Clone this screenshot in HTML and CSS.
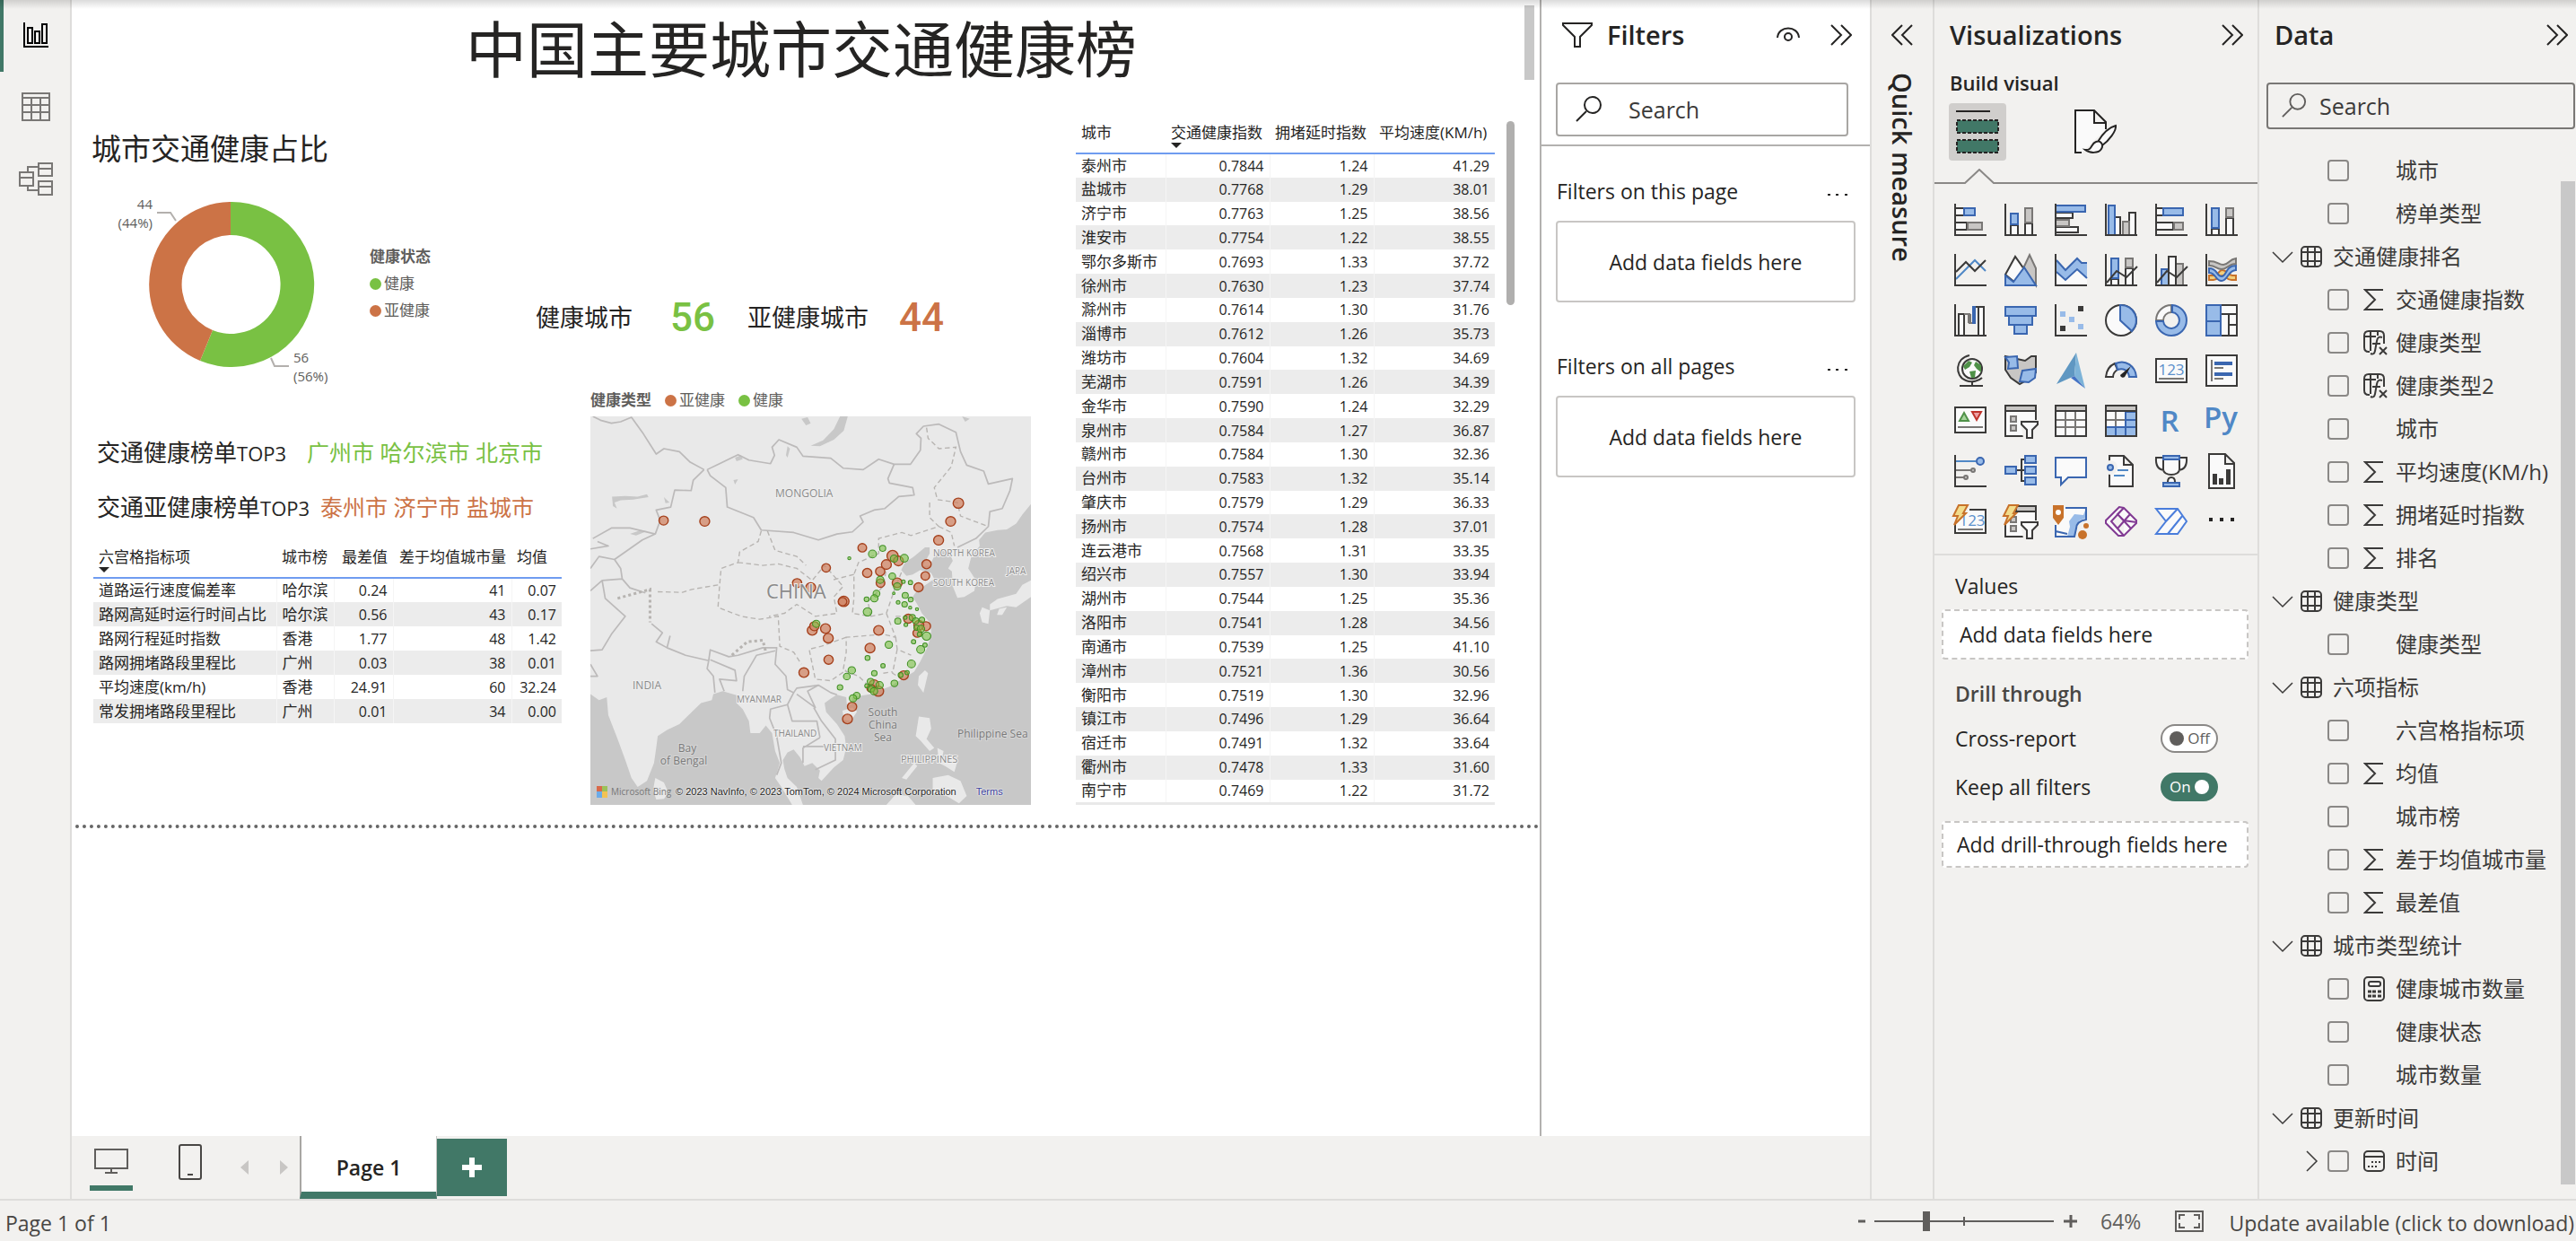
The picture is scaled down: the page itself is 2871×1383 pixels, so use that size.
FILE: index.html
```html
<!DOCTYPE html>
<html lang="zh-CN">
<head>
<meta charset="utf-8">
<title>中国主要城市交通健康榜</title>
<link rel="stylesheet" href="styles.css">
</head>
<body>
<svg class="defs" aria-hidden="true">
  <symbol id="collapse" viewBox="0 0 24 24"><path d="M1 1L12 12L1 23M12 1L23 12L12 23" fill="none" stroke="currentColor" stroke-width="2"/></symbol>
  <symbol id="search" viewBox="0 0 30 30"><circle cx="19" cy="10" r="9" fill="none" stroke="currentColor" stroke-width="2"/><path d="M12 17L1 28" stroke="currentColor" stroke-width="2"/></symbol>
  <symbol id="chevron" viewBox="0 0 24 24"><path d="M1 7L12 18L23 7" fill="none" stroke="currentColor" stroke-width="1.5"/></symbol>
  <symbol id="tbl" viewBox="0 0 24 24"><rect x="1" y="1" width="22" height="22" rx="4" fill="none" stroke="currentColor" stroke-width="2"/><path d="M8 1V23M16 1V23M1 7H23M1 17H23" stroke="currentColor" stroke-width="2"/></symbol>
  <symbol id="sigma" viewBox="0 0 24 24"><path d="M22 1H2L13 12L2 23H22" fill="none" stroke="currentColor" stroke-width="2"/></symbol>
  <symbol id="calc" viewBox="0 0 24 28"><rect x="1" y="1" width="22" height="26" rx="4" fill="none" stroke="currentColor" stroke-width="2"/><rect x="6" y="6" width="13" height="5" rx="2" fill="none" stroke="currentColor" stroke-width="2"/><path d="M5 17h4M10 17h4M16 17h4M5 22h4M10 22h4M16 22h4" stroke="currentColor" stroke-width="3"/></symbol>
  <symbol id="cal" viewBox="0 0 24 24"><rect x="1" y="1" width="22" height="22" rx="4" fill="none" stroke="currentColor" stroke-width="2"/><path d="M1 7H23" stroke="currentColor" stroke-width="2"/><path d="M9 13h2M13 13h2M17 13h2M5 18h2M9 18h2M13 18h2" stroke="currentColor" stroke-width="2"/></symbol>
  <symbol id="fx" viewBox="0 0 28 28"><path d="M7 24H6Q1 24 1 19V6Q1 1 6 1H18Q23 1 23 6V15M8 1V23M1 7H14M16 1V6" fill="none" stroke="currentColor" stroke-width="2"/><path d="M21 8Q16 6 15 12L13 23Q12 28 8 26M10 15H19" fill="none" stroke="currentColor" stroke-width="2"/><path d="M18 19L26 27M26 19L18 27" fill="none" stroke="currentColor" stroke-width="2"/></symbol>
</svg>

<div class="app">
  <nav class="rail" aria-label="Views">
    <button class="rail-btn active" aria-label="Report view"><svg width="28" height="28" viewBox="0 0 28 28"><path d="M1 0V27H28" fill="none" stroke="#000" stroke-width="2"/><path d="M5 6h5v17H5zM13 10h5v13h-5zM21 2h5v21h-5z" fill="none" stroke="#000" stroke-width="2"/></svg></button>
    <button class="rail-btn" aria-label="Table view"><svg width="32" height="32" viewBox="0 0 32 32"><path d="M1 1H31V31H1ZM1 6H31M1 14H31M1 22H31M11 6V31M21 6V31" fill="none" stroke="#797775" stroke-width="2"/></svg></button>
    <button class="rail-btn" aria-label="Model view"><svg width="38" height="38" viewBox="0 0 38 38"><path d="M22 2H37V16H22ZM22 8H37M22 22H37V37H22ZM22 28H37M1 12H16V27H1ZM1 18H16M10 12V6H22M10 27V32H22" fill="none" stroke="#797775" stroke-width="2"/></svg></button>
  </nav>

  <div class="workspace">
    <main class="canvas">
      <div class="report">
        <h1>中国主要城市交通健康榜</h1>
        <div class="report-body">
          <div class="report-left">
            <div class="overview">
              <section class="share">
                <h2>城市交通健康占比</h2>
                <div class="donut-row">
                  <svg class="donut" width="290" height="248" viewBox="0 0 290 248">
                    <path d="M155 39A92 92 0 1 1 121 216L135 182A55 55 0 1 0 155 76Z" fill="#79c143"/>
                    <path d="M155 39A92 92 0 0 0 121 216L135 182A55 55 0 0 1 155 76Z" fill="#cc7346"/>
                    <path d="M73 51H88L94 60M200 213L204 222H220" fill="none" stroke="#b3b0ad" stroke-width="2"/>
                    <text x="68" y="47" text-anchor="end">44</text><text x="68" y="68" text-anchor="end">(44%)</text>
                    <text x="225" y="218">56</text><text x="225" y="239">(56%)</text>
                  </svg>
                  <div class="legend legend-col"><b>健康状态</b><span><i class="dot good"></i>健康</span><span><i class="dot sub"></i>亚健康</span></div>
                </div>
              </section>
              <div class="cards">
                <span>健康城市</span><strong class="c-good">56</strong><span>亚健康城市</span><strong class="c-sub">44</strong>
              </div>
            </div>
            <div class="lower">
              <div class="ranks">
                <p class="top3 wide"><span>交通健康榜单<small>TOP3</small></span><span class="names c-good">广州市 哈尔滨市 北京市</span></p>
                <p class="top3"><span>交通亚健康榜单<small>TOP3</small></span><span class="names c-sub">泰州市 济宁市 盐城市</span></p>
                <table class="grid six">
                  <colgroup><col class="w1"><col class="w2"><col class="w3"><col class="w4"><col class="w5"></colgroup>
                  <thead><tr><th>六宫格指标项<i class="sort"></i></th><th>城市榜</th><th class="n">最差值</th><th class="n">差于均值城市量</th><th>均值</th></tr></thead>
                  <tbody>
                    <tr><td>道路运行速度偏差率</td><td>哈尔滨</td><td>0.24</td><td>41</td><td>0.07</td></tr>
                    <tr><td>路网高延时运行时间占比</td><td>哈尔滨</td><td>0.56</td><td>43</td><td>0.17</td></tr>
                    <tr><td>路网行程延时指数</td><td>香港</td><td>1.77</td><td>48</td><td>1.42</td></tr>
                    <tr><td>路网拥堵路段里程比</td><td>广州</td><td>0.03</td><td>38</td><td>0.01</td></tr>
                    <tr><td>平均速度(km/h)</td><td>香港</td><td>24.91</td><td>60</td><td>32.24</td></tr>
                    <tr><td>常发拥堵路段里程比</td><td>广州</td><td>0.01</td><td>34</td><td>0.00</td></tr>
                  </tbody>
                </table>
              </div>
              <section class="map-box">
                <div class="legend"><b>健康类型</b><span><i class="dot sub"></i>亚健康</span><span><i class="dot good"></i>健康</span></div>
                <div class="map">
                  <svg viewBox="0 0 491 433" width="491" height="433">
                    <rect width="491" height="433" fill="#c8c8c8"/>
                    <g transform="scale(.34435 .33359) translate(-52 -132)">
                      <g fill="#e9e9e9">
                        <path d="M52 132H1478V425L1450 460 1430 490 1400 510 1370 512 1330 520 1310 545 1312 565 1285 600 1275 640 1300 680 1295 715 1262 735 1240 738 1225 700 1222 650 1210 640 1225 615 1215 590 1190 580 1165 600 1150 630 1128 632 1150 590 1150 570 1135 570 1100 600 1070 620 1058 645 1075 665 1095 660 1120 645 1155 655 1165 675 1130 700 1105 720 1095 735 1110 760 1125 790 1150 820 1155 850 1150 880 1140 910 1120 950 1100 985 1060 1010 1020 1035 980 1050 960 1060 930 1065 900 1070 898 1095 882 1095 880 1070 850 1062 830 1075 810 1090 815 1120 850 1160 875 1200 880 1240 870 1280 840 1305 800 1350 790 1340 795 1315 770 1290 745 1300 730 1270 710 1245 690 1255 675 1280 680 1310 690 1340 720 1370 740 1430H705L670 1370 650 1340 665 1290 650 1250 640 1190 620 1165 600 1190 570 1190 565 1150 545 1110 525 1090 530 1065 480 1050 450 1060 445 1080 410 1090 380 1120 340 1160 300 1180 270 1200 265 1240 258 1290 235 1350 205 1370 185 1340 165 1280 140 1210 110 1130 105 1070 80 1080 52 1060Z"/>
                        <path d="M262 1340L290 1355 305 1390 290 1410 265 1412 255 1380ZM868 1115L900 1105 915 1118 895 1150 872 1145ZM1135 980L1145 990 1130 1055 1112 1030 1115 1000ZM1478 680L1450 695 1430 725 1370 742 1345 760 1345 780 1400 765 1430 770 1478 735ZM1320 770L1345 780 1340 825 1320 820 1312 790ZM1375 775L1400 770 1385 795 1368 795ZM1115 1135L1150 1140 1155 1175 1140 1210 1165 1240 1150 1250 1120 1215 1105 1200ZM1175 1240L1195 1250 1190 1275 1215 1260 1240 1285 1230 1320 1200 1300 1180 1290ZM1160 1340L1210 1330 1250 1350 1270 1400 1245 1425 1205 1400 1160 1390ZM1100 1290L1060 1340 1075 1345 1110 1300ZM1010 1430L1040 1395 1080 1400 1105 1430ZM1255 655L1262 662 1258 668Z"/>
                      </g>
                      <g fill="#c8c8c8">
                        <path d="M885 132L872 180 840 210 795 232 765 230 805 212 840 175 860 132ZM122 400L165 398 205 400 235 392 240 402 190 410 150 412 130 420 138 440 125 432ZM180 525L215 512 235 516 200 530ZM690 232L698 240 690 270 685 262ZM520 270L540 262 545 275 525 282ZM515 345L530 342 520 360ZM735 140L755 135 765 155 750 162ZM1255 132L1280 140 1265 150ZM290 402L308 420 295 422Z"/>
                      </g>
                      <g fill="none" stroke="#bcbaba" stroke-width="5" stroke-linejoin="round">
                        <path d="M60 132L85 145 120 155 150 150 185 135 220 185 265 258 290 240 340 250 375 285 420 310"/>
                        <path d="M430 310L470 290 530 260 565 278 635 290 648 262 640 235 662 210 720 235 740 265 830 272 870 305 935 310 985 275 1035 292 1088 292 1120 245 1122 205 1107 190 1130 165 1180 158 1235 185 1250 250 1270 295 1325 315 1340 358 1418 340 1410 380 1385 440 1345 450 1340 500 1300 540 1240 570"/>
                        <path d="M430 310L440 330 490 370 495 435 580 470 605 512 710 520 790 545 850 525 900 518 935 485 925 465 970 445 1005 440 1050 400 1100 395 1095 370 1020 355 1015 340 1035 292"/>
                        <path d="M420 310L385 345 378 380 325 378 312 435 265 445 278 480 262 525 220 545 130 610 150 640 155 675 90 680 52 715M60 540L120 505 180 505 262 525M52 575L110 565 75 550M130 610L80 600 52 640M155 675L180 705 230 722M90 680L100 740 165 800 120 860 90 912 52 915M52 960L75 1000 52 1000"/>
                        <path d="M250 825L285 855 265 885 300 905 360 930 435 948 440 912 500 935 530 930 610 905 655 905 650 960 685 1000 690 1045 710 1055 720 1040 790 1030 830 1055 850 1062M435 948L430 975 450 1000 455 1055M440 945L520 980 525 1015 470 1010 485 1050M300 905L310 865M650 915L590 930 550 1000 545 1050"/>
                        <path d="M710 1055L690 1095 635 1110 632 1140 655 1200 670 1290 655 1330M690 1095L705 1150 785 1150 795 1205M720 1060L780 1105 755 1050 790 1030M775 1105L800 1150 845 1210 845 1280 780 1312M795 1205L740 1240 740 1290M840 1235L740 1235"/>
                      </g>
                      <g fill="none" stroke="#b7b4b1" stroke-width="4" stroke-dasharray="16 10">
                        <path d="M605 515L595 550 535 585 530 620 475 640 470 700 465 770 540 800 600 810 660 800 665 900 710 920 735 960M465 695L380 710 350 720 270 718M530 620L610 630 660 625 720 640 770 680 810 630 870 700 840 735 850 790 780 800 720 760 680 790 630 800M625 515L650 580 720 600 750 630"/>
                        <path d="M1140 170L1145 205 1180 240 1235 235 1220 300 1165 370 1175 410 1240 420 1250 465 1340 500M1150 420L1150 470 1180 500 1090 530 1060 520 985 540 985 590 920 620 905 660 905 740 900 790 960 800 1010 790 1040 700 1060 650M1180 500L1220 520 1230 565M1010 790L1040 870 1000 860 880 870 880 920 870 980 920 1000 960 1040M880 870L800 900 760 910 770 960 780 1010 830 1015 880 980M1040 870L1045 910 1090 930M1045 910L1030 990 1060 1010M905 660L830 680M960 800L950 750 1000 700 1010 640M1040 800L1100 800M1000 990L1030 985"/>
                        <path d="M140 740L245 710 245 820M510 930L560 885 610 880 620 920" stroke-width="9" stroke-dasharray="9 9"/>
                      </g>
                      <g fill="#d08464" fill-opacity=".75" stroke="#a5401c" stroke-width="4">
                        <circle cx="289" cy="480" r="15"/><circle cx="422" cy="483" r="16"/><circle cx="1243" cy="422" r="17"/><circle cx="1218" cy="483" r="16"/><circle cx="1179" cy="546" r="16"/><circle cx="932" cy="571" r="14"/><circle cx="815" cy="638" r="14"/><circle cx="721" cy="689" r="15"/><circle cx="765" cy="704" r="16"/><circle cx="872" cy="750" r="17"/><circle cx="868" cy="751" r="14"/><circle cx="948" cy="655" r="15"/><circle cx="990" cy="650" r="15"/><circle cx="1010" cy="627" r="16"/><circle cx="1030" cy="598" r="18"/><circle cx="1049" cy="615" r="16"/><circle cx="991" cy="689" r="14"/><circle cx="1045" cy="688" r="16"/><circle cx="1140" cy="626" r="15"/><circle cx="1136" cy="665" r="14"/><circle cx="1114" cy="703" r="15"/><circle cx="770" cy="847" r="16"/><circle cx="777" cy="833" r="15"/><circle cx="813" cy="841" r="16"/><circle cx="822" cy="873" r="16"/><circle cx="985" cy="847" r="16"/><circle cx="957" cy="906" r="16"/><circle cx="823" cy="945" r="15"/><circle cx="743" cy="988" r="16"/><circle cx="1066" cy="997" r="15"/><circle cx="1081" cy="808" r="15"/><circle cx="1138" cy="833" r="15"/><circle cx="1115" cy="830" r="16"/><circle cx="1110" cy="856" r="14"/><circle cx="970" cy="1028" r="16"/><circle cx="984" cy="1050" r="17"/><circle cx="960" cy="1040" r="13"/><circle cx="899" cy="1102" r="15"/><circle cx="884" cy="1143" r="16"/>
                      </g>
                      <g fill="#79c143" fill-opacity=".6" stroke="#3f8f24" stroke-width="3">
                        <circle cx="890" cy="606" r="5"/><circle cx="998" cy="573" r="10"/><circle cx="965" cy="592" r="13"/><circle cx="1068" cy="606" r="13"/><circle cx="1035" cy="607" r="12"/><circle cx="1029" cy="666" r="11"/><circle cx="990" cy="678" r="12"/><circle cx="1045" cy="700" r="12"/><circle cx="1065" cy="684" r="6"/><circle cx="1088" cy="687" r="7"/><circle cx="1034" cy="723" r="4"/><circle cx="978" cy="724" r="11"/><circle cx="971" cy="740" r="12"/><circle cx="946" cy="743" r="8"/><circle cx="1071" cy="730" r="10"/><circle cx="1089" cy="744" r="8"/><circle cx="1048" cy="753" r="6"/><circle cx="1069" cy="760" r="9"/><circle cx="1087" cy="771" r="5"/><circle cx="1109" cy="776" r="5"/><circle cx="949" cy="785" r="14"/><circle cx="1047" cy="816" r="10"/><circle cx="1071" cy="804" r="6"/><circle cx="1094" cy="804" r="10"/><circle cx="1105" cy="815" r="10"/><circle cx="1125" cy="812" r="9"/><circle cx="1073" cy="828" r="6"/><circle cx="1108" cy="838" r="9"/><circle cx="1122" cy="842" r="12"/><circle cx="1118" cy="860" r="8"/><circle cx="1140" cy="866" r="14"/><circle cx="1098" cy="885" r="7"/><circle cx="1135" cy="896" r="7"/><circle cx="1121" cy="911" r="13"/><circle cx="1018" cy="895" r="12"/><circle cx="783" cy="825" r="12"/><circle cx="949" cy="939" r="8"/><circle cx="999" cy="965" r="7"/><circle cx="1091" cy="959" r="13"/><circle cx="1077" cy="988" r="7"/><circle cx="1056" cy="996" r="8"/><circle cx="1036" cy="1024" r="11"/><circle cx="898" cy="980" r="12"/><circle cx="882" cy="1001" r="11"/><circle cx="860" cy="1037" r="9"/><circle cx="971" cy="990" r="9"/><circle cx="959" cy="1018" r="11"/><circle cx="947" cy="1032" r="7"/><circle cx="988" cy="1030" r="12"/><circle cx="961" cy="1043" r="10"/><circle cx="970" cy="1050" r="12"/><circle cx="914" cy="1065" r="11"/><circle cx="902" cy="1074" r="12"/>
                      </g>
                    </g>
                    <g class="place">
                      <text x="206" y="90" font-size="12">MONGOLIA</text><text x="196" y="203" font-size="22">CHINA</text>
                      <text x="382" y="156" font-size="10">NORTH KOREA</text><text x="382" y="189" font-size="10">SOUTH KOREA</text><text x="464" y="176" font-size="10">JAPA</text>
                      <text x="47" y="304" font-size="12">INDIA</text><text x="163" y="319" font-size="10">MYANMAR</text><text x="204" y="357" font-size="10">THAILAND</text><text x="260" y="373" font-size="10">VIETNAM</text><text x="346" y="386" font-size="11">PHILIPPINES</text>
                    </g>
                    <g class="sea" font-size="12">
                      <text x="326" y="334" text-anchor="middle">South</text><text x="326" y="348" text-anchor="middle">China</text><text x="326" y="362" text-anchor="middle">Sea</text>
                      <text x="108" y="374" text-anchor="middle">Bay</text><text x="104" y="388" text-anchor="middle">of Bengal</text><text x="409" y="358">Philippine Sea</text>
                    </g>
                  </svg>
                  <div class="attribution"><svg width="12" height="13" viewBox="0 0 12 13"><path d="M0 0h6v6H0z" fill="#d9694a"/><path d="M6 0h6v6H6z" fill="#9cc25a"/><path d="M0 6h6v7H0z" fill="#6cabe8"/><path d="M6 6h6v7H6z" fill="#f3c253"/></svg><span class="bing">Microsoft Bing</span><span class="copy">© 2023 NavInfo, © 2023 TomTom, © 2024 Microsoft Corporation</span><a href="#terms">Terms</a></div>
                </div>
              </section>
            </div>
          </div>
          <div class="index-panel">
            <table class="grid cities">
              <colgroup><col class="c1"><col class="c2"><col class="c3"><col class="c4"></colgroup>
              <thead><tr><th>城市</th><th>交通健康指数<i class="sort"></i></th><th>拥堵延时指数</th><th>平均速度(KM/h)</th></tr></thead>
              <tbody>
                <tr><td>泰州市</td><td>0.7844</td><td>1.24</td><td>41.29</td></tr>
                <tr><td>盐城市</td><td>0.7768</td><td>1.29</td><td>38.01</td></tr>
                <tr><td>济宁市</td><td>0.7763</td><td>1.25</td><td>38.56</td></tr>
                <tr><td>淮安市</td><td>0.7754</td><td>1.22</td><td>38.55</td></tr>
                <tr><td>鄂尔多斯市</td><td>0.7693</td><td>1.33</td><td>37.72</td></tr>
                <tr><td>徐州市</td><td>0.7630</td><td>1.23</td><td>37.74</td></tr>
                <tr><td>滁州市</td><td>0.7614</td><td>1.30</td><td>31.76</td></tr>
                <tr><td>淄博市</td><td>0.7612</td><td>1.26</td><td>35.73</td></tr>
                <tr><td>潍坊市</td><td>0.7604</td><td>1.32</td><td>34.69</td></tr>
                <tr><td>芜湖市</td><td>0.7591</td><td>1.26</td><td>34.39</td></tr>
                <tr><td>金华市</td><td>0.7590</td><td>1.24</td><td>32.29</td></tr>
                <tr><td>泉州市</td><td>0.7584</td><td>1.27</td><td>36.87</td></tr>
                <tr><td>赣州市</td><td>0.7584</td><td>1.30</td><td>32.36</td></tr>
                <tr><td>台州市</td><td>0.7583</td><td>1.32</td><td>35.14</td></tr>
                <tr><td>肇庆市</td><td>0.7579</td><td>1.29</td><td>36.33</td></tr>
                <tr><td>扬州市</td><td>0.7574</td><td>1.28</td><td>37.01</td></tr>
                <tr><td>连云港市</td><td>0.7568</td><td>1.31</td><td>33.35</td></tr>
                <tr><td>绍兴市</td><td>0.7557</td><td>1.30</td><td>33.94</td></tr>
                <tr><td>湖州市</td><td>0.7544</td><td>1.25</td><td>35.36</td></tr>
                <tr><td>洛阳市</td><td>0.7541</td><td>1.28</td><td>34.56</td></tr>
                <tr><td>南通市</td><td>0.7539</td><td>1.25</td><td>41.10</td></tr>
                <tr><td>漳州市</td><td>0.7521</td><td>1.36</td><td>30.56</td></tr>
                <tr><td>衡阳市</td><td>0.7519</td><td>1.30</td><td>32.96</td></tr>
                <tr><td>镇江市</td><td>0.7496</td><td>1.29</td><td>36.64</td></tr>
                <tr><td>宿迁市</td><td>0.7491</td><td>1.32</td><td>33.64</td></tr>
                <tr><td>衢州市</td><td>0.7478</td><td>1.33</td><td>31.60</td></tr>
                <tr><td>南宁市</td><td>0.7469</td><td>1.22</td><td>31.72</td></tr>
              </tbody>
            </table>
            <div class="thumb"></div>
          </div>
        </div>
      </div>
      <div class="page-scroll"></div>
    </main>

    <aside class="filters">
      <header>
        <svg width="34" height="30" viewBox="0 0 34 30"><path d="M1 2H33V4L20 17V28H14V17L1 4Z" fill="none" stroke="#252423" stroke-width="2"/></svg>
        <h3>Filters</h3>
        <button class="ic eye" aria-label="Show filters"><svg width="26" height="18" viewBox="0 0 26 18"><path d="M1 12C2 -2 24 -2 25 12" fill="none" stroke="#252423" stroke-width="2"/><circle cx="13" cy="11" r="4" fill="none" stroke="#252423" stroke-width="2"/></svg></button>
        <button class="ic" aria-label="Collapse filters"><svg width="24" height="24"><use href="#collapse"/></svg></button>
      </header>
      <div class="search"><svg width="30" height="30"><use href="#search"/></svg><input type="text" placeholder="Search" aria-label="Search filters"></div>
      <div class="filter-group">
        <div class="filter-title"><span>Filters on this page</span><button class="ic" aria-label="More"><svg width="22" height="4"><path d="M0 2h3M9 2h3M19 2h3" stroke="#252423" stroke-width="2"/></svg></button></div>
        <div class="drop">Add data fields here</div>
      </div>
      <div class="filter-group">
        <div class="filter-title"><span>Filters on all pages</span><button class="ic" aria-label="More"><svg width="22" height="4"><path d="M0 2h3M9 2h3M19 2h3" stroke="#252423" stroke-width="2"/></svg></button></div>
        <div class="drop">Add data fields here</div>
      </div>
    </aside>

    <div class="tabs">
      <button class="device on" aria-label="Desktop layout"><svg width="38" height="28" viewBox="0 0 38 28"><path d="M1 1H37V22H1ZM19 22V27M12 27H26" fill="none" stroke="#605e5c" stroke-width="2"/></svg></button>
      <button class="device phone" aria-label="Mobile layout"><svg width="26" height="40" viewBox="0 0 26 40"><rect x="1" y="1" width="24" height="38" rx="2" fill="none" stroke="#484644" stroke-width="2"/><path d="M10 34h6" stroke="#484644" stroke-width="2"/></svg></button>
      <button class="step" aria-label="Previous page"><svg width="9" height="16"><path d="M9 0V16L0 8Z" fill="#c8c6c4"/></svg></button>
      <button class="step" aria-label="Next page"><svg width="9" height="16"><path d="M0 0V16L9 8Z" fill="#c8c6c4"/></svg></button>
      <button class="tab">Page 1</button>
      <button class="add" aria-label="New page"><svg width="22" height="22"><path d="M11 0V22M0 11H22" stroke="#fff" stroke-width="6"/></svg></button>
    </div>
  </div>

  <aside class="quick">
    <button class="ic flip" aria-label="Expand quick measure"><svg width="24" height="24"><use href="#collapse"/></svg></button>
    <h3>Quick measure</h3>
  </aside>

  <aside class="vis">
    <header><h3>Visualizations</h3><button class="ic" aria-label="Collapse visualizations"><svg width="24" height="24"><use href="#collapse"/></svg></button></header>
    <h4>Build visual</h4>
    <div class="modes">
      <button class="mode on" aria-label="Build visual"><svg width="48" height="50" viewBox="0 0 48 50"><path d="M0 2H38" stroke="#252423" stroke-width="2"/><path d="M1 12H47V26H1ZM1 34H47V48H1Z" fill="#417867" stroke="#252423" stroke-width="2" stroke-dasharray="4 2"/></svg></button>
      <button class="mode" aria-label="Format page"><svg width="48" height="50" viewBox="0 0 48 50"><path d="M8 48H1V1H22L35 14V22M22 1V15H35" fill="#fafafa" stroke="#252423" stroke-width="2"/><path d="M12 45C20 46 18 38 24 36C29 34 33 39 30 44C27 49 17 49 12 45ZM26 36C32 26 38 20 46 18C47 24 38 35 31 40" fill="#fafafa" stroke="#252423" stroke-width="2"/></svg></button>
    </div>
    <svg class="notch" height="18" width="100%"><path d="M0 16H34L50 1L66 16H400" fill="none" stroke="#8a8886" stroke-width="2"/></svg>
    <div class="gallery">
      <button aria-label="Stacked bar"><svg viewBox="0 0 36 36"><path class="k" d="M1 5h10v8H1zM1 21h13v8H1z"/><path class="b" d="M11 5h12v8H11z"/><path class="g" d="M15 21h16v8H15z"/><path class="ln" d="M1 0V35H36"/></svg></button>
      <button aria-label="Stacked column"><svg viewBox="0 0 36 36"><path class="k" d="M7 24h8v11H7zM23 22h8v13h-8z"/><path class="b" d="M7 11h8v12H7z"/><path class="g" d="M23 5h8v16h-8z"/><path class="ln" d="M1 0V35H36"/></svg></button>
      <button aria-label="Clustered bar"><svg viewBox="0 0 36 36"><path class="k" d="M1 10h19v6H1zM1 26h25v6H1z"/><path class="g" d="M1 18h15v7H1z"/><path class="b" d="M1 2h33v7H1z"/><path class="ln" d="M1 0V35H36"/></svg></button>
      <button aria-label="Clustered column"><svg viewBox="0 0 36 36"><path class="k" d="M11 15h6v20h-6zM27 10h7v25h-7z"/><path class="g" d="M20 20h7v15h-7z"/><path class="b" d="M4 2h7v33H4z"/><path class="ln" d="M1 0V35H36"/></svg></button>
      <button aria-label="100% stacked bar"><svg viewBox="0 0 36 36"><path class="k" d="M1 5h8v8H1zM1 21h19v8H1z"/><path class="b" d="M9 5h22v8H9z"/><path class="g" d="M21 21h10v8H21z"/><path class="ln" d="M1 0V35H36"/></svg></button>
      <button aria-label="100% stacked column"><svg viewBox="0 0 36 36"><path class="k" d="M7 28h8v7H7zM23 16h8v19h-8z"/><path class="b" d="M7 5h8v22H7z"/><path class="g" d="M23 5h8v10h-8z"/><path class="ln" d="M1 0V35H36"/></svg></button>

      <button aria-label="Line"><svg viewBox="0 0 36 36"><path class="lb" d="M2 28L23 7L35 19"/><path class="ln" d="M2 20L13 9L23 19L35 7"/><path class="ln" d="M1 0V35H36"/></svg></button>
      <button aria-label="Area"><svg viewBox="0 0 36 36"><path class="k" d="M1 23L12 3L24 20L12 32Z"/><path class="g" d="M21 16L28 1L35 16V35Z"/><path class="b" d="M1 24L10 31L22 15L35 35H1Z"/></svg></button>
      <button aria-label="Stacked area"><svg viewBox="0 0 36 36"><path d="M2 21L12 29L25 17L36 27V34H2Z" fill="#fafafa"/><path d="M2 7L12 18L25 5L30 10H36V27L25 17L12 29L2 20Z" fill="#98bbe8"/><path d="M2 7L12 18L25 5L30 10H36M36 27L25 17L12 29L2 20" fill="none" stroke="#3a66b0" stroke-width="2"/><path class="ln" d="M1 0V35H36"/></svg></button>
      <button aria-label="Line and stacked column"><svg viewBox="0 0 36 36"><path class="k" d="M7 28h8v7H7zM23 16h8v19h-8z"/><path class="b" d="M7 5h8v22H7z"/><path class="g" d="M23 5h8v10h-8z"/><path class="ln" d="M2 32L13 19L24 26L36 14M1 0V35H36"/></svg></button>
      <button aria-label="Line and clustered column"><svg viewBox="0 0 36 36"><path class="b" d="M7 17h8v18H7z"/><path class="g" d="M23 11h8v24h-8z"/><path class="k" d="M15 3h8v32h-8z"/><path class="ln" d="M2 32L13 19L24 26L36 14M1 0V35H36"/></svg></button>
      <button aria-label="Ribbon"><svg viewBox="0 0 36 36"><path d="M4 24H9C15 24 14 18 19 18S25 24 30 24H34V29H29C23 29 23 24 19 24S14 29 9 29H4Z" fill="#f2cf7c" stroke="#c8722a" stroke-width="2"/><path class="g" d="M4 8C14 8 14 12 20 12S26 6 34 5V11C26 11 24 17 18 17S10 12 4 13Z"/><path class="b" d="M4 16C14 16 12 25 18 25S22 13 34 13V18C25 18 25 30 18 30S12 21 4 21Z"/><path class="ln" d="M1 0V35H36"/></svg></button>

      <button aria-label="Waterfall"><svg viewBox="0 0 36 36"><path class="k" d="M5 11h6v24H5zM27 3h6v32h-6z"/><path d="M11 11h6v10h4" fill="none" stroke="#797775" stroke-width="2"/><path d="M15 11h4v10h-4z" fill="#797775"/><path d="M20 2h4v20h-4z" fill="#3a66b0"/><path class="ln" d="M24 3h4M1 0V35H36"/></svg></button>
      <button aria-label="Funnel"><svg viewBox="0 0 36 36"><path class="b" d="M1 3h34v10H1zM5 13h26v10H5zM11 23h14v10H11z"/></svg></button>
      <button aria-label="Scatter"><svg viewBox="0 0 36 36"><path d="M6 8h6v6H6zM16 14h6v6h-6zM26 22h6v6h-6z" fill="#98bbe8"/><path d="M26 2h6v6h-6zM6 24h6v6H6z" fill="#3b3a39"/><path class="ln" d="M1 0V35H36"/></svg></button>
      <button aria-label="Pie"><svg viewBox="0 0 36 36"><circle class="k" cx="18" cy="18" r="17"/><path class="b" d="M17 18V1A17 17 0 0 1 30 30Z"/></svg></button>
      <button aria-label="Donut"><svg viewBox="0 0 36 36"><path d="M18 1V9A9 9 0 0 0 9 18H1A17 17 0 0 1 18 1Z" fill="#fafafa" stroke="#797775" stroke-width="2"/><path class="b" d="M19 1A17 17 0 1 1 1 19H9A9 9 0 1 0 19 9Z"/></svg></button>
      <button aria-label="Treemap"><svg viewBox="0 0 36 36"><path class="k" d="M17 1H35V35H17ZM17 11H35M26 11V35M26 23H35"/><path class="b" d="M1 1h16v34H1zM1 19H17"/></svg></button>

      <button aria-label="Map"><svg viewBox="0 0 36 36"><circle class="k" cx="20" cy="16" r="11"/><path d="M10 13L16 7 20 9 17 14 12 17ZM24 8L30 12V20L25 16 22 12ZM17 19L24 18 23 26 19 26Z" fill="#4f9148"/><path class="ln" d="M17 1C1 4 0 24 13 29C20 32 28 29 31 26M20 31V35M6 35H32"/></svg></button>
      <button aria-label="Filled map"><svg viewBox="0 0 36 36"><path class="g s" d="M14 5L23 7 30 2H35V20L26 28 17 33 7 26 1 17V2Z"/><path class="b" d="M1 3L14 2 15 15 4 16 5 9ZM20 18L35 16 34 26 27 31 17 30Z"/></svg></button>
      <button aria-label="Azure map"><svg viewBox="0 0 36 36"><path d="M24 -2L2 33L22 24Z" fill="#5f97c2"/><path d="M24 -2L22 24L34 38Z" fill="#7db3d8"/><path d="M18 26L22 24L34 38Z" fill="#4472c4"/></svg></button>
      <button aria-label="Gauge"><svg viewBox="0 0 36 36"><path class="k" d="M1 25Q2 14 11 10L14 17Q9 20 9 25Z"/><path class="b" d="M12 10C23 5 34 13 35 25H27C26 17 20 15 14 17Z"/><path d="M17 23L29 13 22 25A3 3 0 0 1 17 23Z" fill="#252423"/></svg></button>
      <button aria-label="Card"><svg viewBox="0 0 36 36"><rect class="k" x="1" y="5" width="34" height="26"/><text x="18" y="23" text-anchor="middle" class="num">123</text><path class="lg" d="M4 27H32"/></svg></button>
      <button aria-label="Multi-row card"><svg viewBox="0 0 36 36"><rect class="k" x="1" y="1" width="34" height="34"/><path class="lg" d="M7 6V30M10 15H20M10 27H20"/><path d="M10 10H30M10 22H30" stroke="#3a66b0" stroke-width="4"/></svg></button>

      <button aria-label="KPI"><svg viewBox="0 0 36 36"><rect class="k" x="1" y="3" width="34" height="28"/><path d="M6 18L11 9L16 18Z" fill="#a6d49c" stroke="#4f9148" stroke-width="2"/><path d="M20 8H30L25 17Z" fill="#eba1a4" stroke="#c0342c" stroke-width="2"/><path class="lg" d="M4 25H32"/></svg></button>
      <button aria-label="Slicer"><svg viewBox="0 0 36 36"><path class="k" d="M1 1H35V35H1Z"/><path class="g s" d="M1 1H35V7H1Z"/><path class="g" d="M7 13h6v6H7zM7 23h6v6H7z"/><path d="M17 17H38V37H21Z" fill="#f2f1ef"/><path class="k" d="M19 19H37V22L31 28V37H25V28L19 22Z"/></svg></button>
      <button aria-label="Table"><svg viewBox="0 0 36 36"><rect class="k" x="1" y="1" width="34" height="34"/><path class="lg" d="M12 7V34M23 7V34M2 17H34M2 25H34"/><path class="g s" d="M1 1H35V7H1Z"/><path class="ln" d="M1 1H35V35H1Z"/></svg></button>
      <button aria-label="Matrix"><svg viewBox="0 0 36 36"><rect class="k" x="1" y="1" width="34" height="34"/><path class="lg" d="M12 7V25M2 17H23"/><path class="b" d="M23 8H35V35H1V25H23ZM23 17H35M23 25H35M12 25V35M23 25V35"/><path class="g s" d="M1 1H35V7H1Z"/><path class="ln" d="M1 1H35V35H1Z"/></svg></button>
      <button aria-label="R script"><svg viewBox="0 0 36 36"><text class="lang" x="16" y="30" text-anchor="middle">R</text></svg></button>
      <button aria-label="Python script"><svg viewBox="0 0 36 36"><text class="lang" x="17" y="26" text-anchor="middle">Py</text></svg></button>

      <button aria-label="Key influencers"><svg viewBox="0 0 36 36"><path class="lb" d="M2 7H24"/><path class="lg" d="M2 17H20M2 25H12"/><circle class="b" cx="29" cy="7" r="4"/><circle class="g" cx="21" cy="17" r="2"/><circle class="g" cx="13" cy="25" r="2"/><path class="ln" d="M1 0V35H36"/></svg></button>
      <button aria-label="Decomposition tree"><svg viewBox="0 0 36 36"><path class="ln" d="M14 17H22M23 5H19V29H23"/><path class="b" d="M1 13h12v8H1zM23 1h12v8H23zM23 13h12v8H23zM23 25h12v8H23z"/></svg></button>
      <button aria-label="Q&amp;A"><svg viewBox="0 0 36 36"><path d="M1 3H35V25H15L7 33V25H1Z" fill="#fafafa" stroke="#3a66b0" stroke-width="2"/></svg></button>
      <button aria-label="Narrative"><svg viewBox="0 0 36 36"><path class="k" d="M5 1H21L31 11V35H5ZM21 1V11H31"/><circle cx="6" cy="14" r="8" fill="#f2f1ef"/><circle class="b" cx="6" cy="14" r="3"/><path class="lb" d="M14 17H26M10 23H22"/></svg></button>
      <button aria-label="Goals"><svg viewBox="0 0 36 36"><path class="k" d="M9 3H1Q0 16 10 17M27 3H35Q36 16 26 17M9 3V16C9 24 27 24 27 16V3ZM14 30Q14 25 18 25T22 30"/><path class="b" d="M9 1h18v4H9zM9 31h18v4H9z"/></svg></button>
      <button aria-label="Paginated report"><svg viewBox="0 0 36 36"><path class="k" d="M4 -1H22L32 9V37H4ZM22 -1V10H32"/><path d="M8 21h5v12H8zM15 26h5v7h-5zM23 16h5v17h-5z" fill="#3b3a39"/></svg></button>

      <button aria-label="Card (new)"><svg viewBox="0 0 36 36"><path class="k" d="M17 5H35V31H1V20"/><text x="20" y="23" text-anchor="middle" class="num">123</text><path class="lg" d="M4 27H32"/><path class="bolt" d="M5 0H15L10 9H13L0 22L4 12H-1Z"/></svg></button>
      <button aria-label="Slicer (new)"><svg viewBox="0 0 36 36"><path class="k" d="M9 1H35V35H1V20"/><path class="g s" d="M13 1H35V7H13Z"/><path class="g" d="M7 13h6v6H7zM7 23h6v6H7z"/><path d="M17 17H38V37H21Z" fill="#f2f1ef"/><path class="k" d="M19 19H37V22L31 28V37H25V28L19 22Z"/><path class="bolt" d="M5 0H15L10 9H13L0 22L4 12H-1Z"/></svg></button>
      <button aria-label="ArcGIS map"><svg viewBox="0 0 36 36"><path d="M12 3H35V16L24 24L20 35H1V22Z" fill="#fafafa"/><path d="M35 14L28 17 24 24 23 35H14L17 24 16 18 22 10 32 11 35 3Z" fill="#98bbe8"/><path d="M12 3H35V16Q24 18 24 26L22 35H1V22M1 29L14 32" fill="none" stroke="#3a66b0" stroke-width="2"/><path d="M-2 0H10V14L4 22L-2 14Z" fill="#c8722a"/><circle cx="4" cy="8" r="3" fill="#fff"/><circle cx="31" cy="33" r="5" fill="#c8722a"/><circle cx="35" cy="23" r="3" fill="#c8722a"/></svg></button>
      <button aria-label="Power Apps"><svg viewBox="0 0 36 36"><path d="M16 2L1 17V20L15 34H21L35 20V17L21 3ZM21 3L14 10L29 26M14 10L21 17L35 19M28 10L14 26M21 34L14 26L7 18L21 3" fill="#fafafa" stroke="#813a93" stroke-width="2"/></svg></button>
      <button aria-label="Power Automate"><svg viewBox="0 0 36 36"><path d="M1 4H25L35 18L25 32H1L12 18ZM12 18L25 4M14 32L31 11" fill="#fafafa" stroke="#4a7ddb" stroke-width="2"/></svg></button>
      <button aria-label="More visuals"><svg viewBox="0 0 36 36"><path d="M4 16h4M16 16h4M28 16h4" stroke="#252423" stroke-width="4"/></svg></button>
    </div>
    <div class="wells">
      <p>Values</p>
      <div class="well">Add data fields here</div>
      <h4>Drill through</h4>
      <label class="switch"><span>Cross-report</span><span class="toggle"><input type="checkbox" role="switch"><em>Off</em></span></label>
      <label class="switch"><span>Keep all filters</span><span class="toggle"><input type="checkbox" role="switch" checked><em>On</em></span></label>
      <div class="well drill">Add drill-through fields here</div>
    </div>
  </aside>

  <aside class="data">
    <header><h3>Data</h3><button class="ic" aria-label="Collapse data"><svg width="24" height="24"><use href="#collapse"/></svg></button></header>
    <div class="search"><svg width="28" height="28"><use href="#search"/></svg><input type="text" placeholder="Search" aria-label="Search data"></div>
    <div class="tree-wrap">
      <div class="tree">
        <label class="f"><input type="checkbox"><i></i>城市</label>
        <label class="f"><input type="checkbox"><i></i>榜单类型</label>
        <div class="t"><svg><use href="#chevron"/></svg><svg><use href="#tbl"/></svg>交通健康排名</div>
        <label class="f"><input type="checkbox"><svg><use href="#sigma"/></svg>交通健康指数</label>
        <label class="f"><input type="checkbox"><svg class="fx"><use href="#fx"/></svg>健康类型</label>
        <label class="f"><input type="checkbox"><svg class="fx"><use href="#fx"/></svg>健康类型2</label>
        <label class="f"><input type="checkbox"><i></i>城市</label>
        <label class="f"><input type="checkbox"><svg><use href="#sigma"/></svg>平均速度(KM/h)</label>
        <label class="f"><input type="checkbox"><svg><use href="#sigma"/></svg>拥堵延时指数</label>
        <label class="f"><input type="checkbox"><svg><use href="#sigma"/></svg>排名</label>
        <div class="t"><svg><use href="#chevron"/></svg><svg><use href="#tbl"/></svg>健康类型</div>
        <label class="f"><input type="checkbox"><i></i>健康类型</label>
        <div class="t"><svg><use href="#chevron"/></svg><svg><use href="#tbl"/></svg>六项指标</div>
        <label class="f"><input type="checkbox"><i></i>六宫格指标项</label>
        <label class="f"><input type="checkbox"><svg><use href="#sigma"/></svg>均值</label>
        <label class="f"><input type="checkbox"><i></i>城市榜</label>
        <label class="f"><input type="checkbox"><svg><use href="#sigma"/></svg>差于均值城市量</label>
        <label class="f"><input type="checkbox"><svg><use href="#sigma"/></svg>最差值</label>
        <div class="t"><svg><use href="#chevron"/></svg><svg><use href="#tbl"/></svg>城市类型统计</div>
        <label class="f"><input type="checkbox"><svg class="calc"><use href="#calc"/></svg>健康城市数量</label>
        <label class="f"><input type="checkbox"><i></i>健康状态</label>
        <label class="f"><input type="checkbox"><i></i>城市数量</label>
        <div class="t"><svg><use href="#chevron"/></svg><svg><use href="#tbl"/></svg>更新时间</div>
        <label class="f sub-tree"><svg class="right"><use href="#chevron"/></svg><input type="checkbox"><svg><use href="#cal"/></svg>时间</label>
      </div>
      <div class="tree-thumb"></div>
    </div>
  </aside>
</div>

<footer class="status">
  <span>Page 1 of 1</span>
  <div class="zoom">
    <button class="ic" aria-label="Zoom out"><svg width="8" height="16"><path d="M0 8H8" stroke="#605e5c" stroke-width="3"/></svg></button>
    <input type="range" min="0" max="100" value="28" aria-label="Zoom">
    <button class="ic" aria-label="Zoom in"><svg width="15" height="16"><path d="M0 8H15M8 1V15" stroke="#605e5c" stroke-width="3"/></svg></button>
    <span class="pct">64%</span>
    <button class="ic" aria-label="Fit to page"><svg width="32" height="24"><path d="M1 1H31V23H1ZM5 10V5H11M21 5H27V10M27 14V19H21M11 19H5V14" fill="none" stroke="#605e5c" stroke-width="2"/></svg></button>
  </div>
  <a href="#update">Update available (click to download)</a>
</footer>
<div class="top-shade"></div>
</body>
</html>
```
FILE: styles.css
```css
* { box-sizing: border-box; }
body {
  margin: 0;
  min-height: 100vh;
  display: flex;
  flex-direction: column;
  background: #f2f1ef;
  color: #252423;
  font-family: "Open Sans", "Noto Sans CJK SC", sans-serif;
  font-size: 23px;
  line-height: 28px;
}
h1, h2, h3, h4, p { margin: 0; font-weight: 400; }
button { border: 0; background: none; padding: 0; font: inherit; color: inherit; }
svg { display: block; flex: none; }
.defs { position: absolute; width: 0; height: 0; }
.ic { display: flex; align-items: center; }
h3 { font-size: 29px; font-weight: 600; line-height: 36px; }
.c-good { color: #79c143; }
.c-sub { color: #cc7346; }
.top-shade { position: absolute; top: 0; left: 0; right: 0; height: 10px; background: linear-gradient(rgba(0,0,0,.14), transparent); pointer-events: none; }

.app { flex: 1; display: grid; grid-template-columns: 80px 1fr 70px 362px 355px; }

/* view rail */
.rail { border-right: 2px solid #dedddb; }
.rail-btn { width: 78px; height: 80px; display: flex; align-items: center; justify-content: center; border-left: 4px solid transparent; padding: 0 3px 2px 0; }
.rail-btn.active { border-left-color: #417867; }

.workspace { display: grid; grid-template-columns: 1fr 368px; grid-template-rows: 1fr 70px; }

/* report canvas */
.canvas { background: #fff; padding-left: 4px; position: relative; }
.report { border-bottom: 4px dotted #666; padding: 0 28px 22px 0; }
h1 { font-size: 68px; line-height: 110px; text-align: center; padding-left: 14px; }
.report-body { display: flex; justify-content: space-between; }
.report-left { width: 1065px; }
.overview { display: flex; height: 324px; }
.share { width: 513px; padding: 36px 0 0 18px; }
h2 { font-size: 33px; line-height: 40px; }
.donut-row { display: flex; gap: 20px; }
.donut text { font-size: 15px; fill: #605e5c; }
.legend { display: flex; gap: 15px; font-size: 17px; line-height: 24px; color: #605e5c; }
.legend span { display: flex; align-items: center; gap: 3px; }
.legend b { font-weight: 700; }
.legend-col { flex-direction: column; gap: 6px; padding-top: 88px; }
.dot { width: 13px; height: 13px; border-radius: 50%; }
.good { background: #79c143; }
.sub { background: #cc7346; }
.cards { display: flex; align-items: center; font-size: 27px; line-height: 50px; margin-top: 164px; height: 160px; align-self: flex-start; }
.cards strong { font-family: Roboto, sans-serif; font-size: 44px; font-weight: 500; margin: 0 36px 0 42px; }
.cards .c-sub { margin-left: 34px; }
.lower { display: flex; }
.ranks { width: 574px; padding: 50px 0 0 20px; }
.top3 { display: flex; gap: 12px; font-size: 26px; line-height: 40px; margin: 0 0 20px 4px; }
.top3.wide { gap: 23px; }
.top3 small { font-size: 22px; }
.names { font-size: 25px; }

/* data grids */
.grid { border-collapse: collapse; table-layout: fixed; font-size: 17px; line-height: 22px; }
.grid th { font-weight: 400; text-align: left; vertical-align: top; padding: 0 6px; height: 34px; border-bottom: 2px solid #6f9cf0; white-space: nowrap; }
.grid th.n { text-align: right; }
.grid td { padding: 0 6px; height: 27px; border-left: 1px solid #f5f5f5; white-space: nowrap; }
.grid td:first-child { border-left: 0; }
.grid tbody tr:nth-child(even) { background: #ececec; }
.sort { display: block; width: 0; border: 6px solid transparent; border-top-color: #252423; border-bottom: 0; }
.six { width: 522px; margin-top: 24px; }
.six td:nth-child(n+3) { text-align: right; font-size: 16px; }
.w1 { width: 204px; } .w2 { width: 64px; } .w3 { width: 66px; } .w4 { width: 132px; } .w5 { width: 56px; }
.index-panel { display: flex; align-items: flex-start; gap: 13px; padding-top: 25px; }
.cities { width: 467px; height: 760px; margin-top: 2px; border-bottom: 3px solid #e9e9e9; }
.cities td { height: 26px; line-height: 20px; }
.cities td:nth-child(n+2) { text-align: right; font-size: 16px; }
.c1 { width: 100px; } .c2 { width: 116px; } .c3 { width: 116px; } .c4 { width: 135px; }
.thumb { width: 9px; height: 205px; border-radius: 5px; background: #b0afae; }
.page-scroll { position: absolute; right: 6px; top: 6px; width: 11px; height: 83px; background: #c8c8c8; }

/* map */
.map { position: relative; margin-top: 6px; width: 491px; overflow: hidden; }
.place text { fill: #8b8b8b; stroke: #efefef; stroke-width: 2px; paint-order: stroke; }
.sea text { fill: #7a7a7a; stroke: #d5d5d5; stroke-width: 2px; paint-order: stroke; }
.attribution { position: absolute; left: 7px; bottom: 6px; display: flex; align-items: center; font-size: 11px; line-height: 18px; white-space: nowrap; }
.bing { color: #777; margin-left: 4px; width: 72px; font-size: 10px; }
.copy, .attribution a { font-family: "Liberation Sans", Arial, sans-serif; text-shadow: 0 0 2px #fff, 0 0 2px #fff; }
.attribution a { color: #3b3f9c; margin-left: 22px; text-decoration: none; }

/* filters */
.filters { background: #fff; border-left: 2px solid #b3b1af; }
.filters header { display: flex; align-items: center; padding: 21px 20px 0 23px; }
.filters h3 { margin: 0 auto 0 16px; }
.eye { margin-right: 34px; }
.search { display: flex; align-items: center; border: 2px solid #a8a6a3; border-radius: 4px; }
.search input { border: 0; background: none; outline: 0; flex: 1; min-width: 0; padding: 0; font: inherit; font-size: 25px; color: #252423; }
.search input::placeholder { color: #3b3a39; opacity: 1; }
.filters .search { margin: 35px 24px 0 16px; height: 60px; padding-left: 20px; gap: 29px; background: #fff; }
.filters .search + .filter-group { border-top: 2px solid #b3b1af; margin-top: 9px; padding-top: 36px; }
.filter-group { padding: 57px 16px 0; }
.filter-title { display: flex; justify-content: space-between; align-items: center; padding: 0 9px 0 1px; }
.filter-title svg { margin-top: 8px; }
.drop { margin-top: 19px; height: 91px; border: 2px solid #c8c6c4; border-radius: 4px; display: flex; align-items: center; justify-content: center; }

/* page tabs */
.tabs { grid-column: 1 / -1; display: flex; background: #f2f1ef; }
.device { width: 48px; margin-left: 20px; display: flex; align-items: center; justify-content: center; border-bottom: 6px solid transparent; margin-bottom: 9px; }
.device.on { background: linear-gradient(#417867, #417867) bottom / 100% 6px no-repeat; background-origin: border-box; }
.device.phone { margin: 0 32px 0 40px; border: 0; padding-bottom: 12px; }
.step { width: 44px; display: flex; align-items: center; }
.step + .step { width: 22px; }
.tab { width: 153px; background: #fff; border-left: 2px solid #a8a6a3; border-bottom: 8px solid #417867; border-right: 1px solid #c8c6c4; font-weight: 600; padding-top: 8px; }
.add { width: 78px; margin: 3px 0; background: #417867; display: flex; align-items: center; justify-content: center; }

/* quick measure */
.quick { border-left: 2px solid #dedddb; display: flex; flex-direction: column; align-items: center; padding-top: 27px; }
.quick h3 { writing-mode: vertical-rl; margin-top: 30px; }
.flip svg { transform: rotate(180deg); }

/* visualizations */
.vis { border-left: 2px solid #dedddb; }
.vis header, .data header { display: flex; justify-content: space-between; align-items: center; padding: 21px 16px 0 17px; }
h4 { font-weight: 600; }
.vis > h4 { margin: 21px 0 9px 17px; font-size: 22px; }
.modes { display: flex; gap: 68px; padding-left: 16px; }
.mode { width: 64px; height: 64px; border-radius: 4px; display: flex; align-items: center; justify-content: center; }
.mode.on { background: #d0cecc; }
.notch { margin-top: 9px; }
.gallery { display: grid; grid-template-columns: repeat(6, 36px); gap: 20px; padding: 21px 0 18px 22px; border-bottom: 2px solid #dedddb; }
.gallery svg { width: 36px; height: 36px; overflow: visible; }
.k { fill: #fafafa; stroke: #3b3a39; stroke-width: 2; }
.b { fill: #98bbe8; stroke: #3a66b0; stroke-width: 2; }
.g { fill: #c8c6c4; stroke: #797775; stroke-width: 2; }
.g.s { stroke: #3b3a39; }
.ln { fill: none; stroke: #3b3a39; stroke-width: 2; }
.lb { fill: none; stroke: #5088c6; stroke-width: 2; }
.lg { fill: none; stroke: #797775; stroke-width: 2; }
.bolt { fill: #f2dc8c; stroke: #c8722a; stroke-width: 2; }
.num { font-size: 17px; fill: #5a90cc; }
.lang { font-size: 33px; font-weight: 600; fill: #5088c6; }
.wells { padding: 20px 10px 0 8px; }
.wells p, .wells h4, .switch { padding-left: 15px; }
.well { margin-top: 12px; height: 56px; border: 2px dashed #c8c6c4; border-radius: 4px; background: #fff; padding: 0 18px; display: flex; align-items: center; white-space: nowrap; }
.wells h4 { margin: 24px 0 20px; color: #484644; }
.switch { display: flex; justify-content: space-between; align-items: center; padding-right: 34px; height: 32px; margin-bottom: 22px; }
.toggle { position: relative; display: block; width: 64px; height: 32px; }
.toggle input { appearance: none; margin: 0; width: 64px; height: 32px; border: 2px solid #8a8886; border-radius: 16px; background: #fff; display: block; }
.toggle input::before { content: ""; display: block; width: 16px; height: 16px; border-radius: 50%; background: #605e5c; margin: 6px 8px; }
.toggle input:checked { background: #417867; border-color: #417867; }
.toggle input:checked::before { background: #fff; margin-left: 36px; }
.toggle em { position: absolute; right: 9px; top: 2px; font-style: normal; font-size: 17px; color: #605e5c; }
.toggle input:checked + em { right: auto; left: 10px; color: #fff; }
.drill { height: 52px; padding: 0 15px; margin-top: 20px; }

/* data pane */
.data { border-left: 2px solid #dedddb; display: flex; flex-direction: column; }
.data header { padding-right: 9px; }
.data .search { margin: 35px 1px 0 8px; height: 52px; border-color: #797775; padding-left: 15px; gap: 14px; color: #605e5c; }
.tree-wrap { display: flex; flex: 1; padding-top: 22px; justify-content: space-between; }
.tree { font-size: 24px; }
.f, .t { display: flex; align-items: center; height: 48px; white-space: nowrap; color: #3b3a39; }
.f { padding-left: 76px; }
.f i, .f svg, .t svg { width: 24px; height: 24px; margin-right: 12px; }
.t { padding-left: 14px; }
.t svg + svg { margin-left: -4px; }
.f input { appearance: none; width: 24px; height: 24px; margin: 0 16px 0 0; border: 2px solid #8a8886; border-radius: 4px; flex: none; }
.f .fx { width: 28px; height: 28px; margin-right: 8px; }
.f .calc { height: 28px; }
.sub-tree { padding-left: 46px; }
.f .right { transform: rotate(-90deg); margin-right: 6px; }
.tree-thumb { width: 16px; margin: 36px 1px 16px 0; background: #c8c8c8; }

/* status bar */
.status { height: 47px; border-top: 2px solid #dedddb; display: flex; align-items: center; padding: 4px 2px 0 6px; color: #484644; white-space: nowrap; }
.zoom { display: flex; align-items: center; margin-left: auto; margin-bottom: 4px; }
.zoom input { appearance: none; width: 200px; height: 22px; margin: 0 11px 0 10px; background: linear-gradient(#605e5c, #605e5c) 50% 50% / 2px 10px no-repeat, linear-gradient(#605e5c, #605e5c) 0 50% / 100% 2px no-repeat; }
.zoom input::-webkit-slider-thumb { appearance: none; width: 8px; height: 22px; background: #605e5c; }
.pct { margin: 0 38px 0 26px; color: #605e5c; }
.status a { color: inherit; text-decoration: none; margin-left: 28px; }
```
